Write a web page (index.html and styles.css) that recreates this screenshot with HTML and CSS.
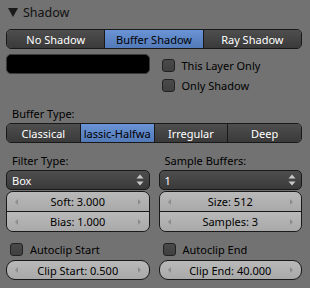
FILE: index.html
```html
<!DOCTYPE html>
<html>
<head>
<meta charset="utf-8">
<link rel="stylesheet" href="styles.css">
</head>
<body>
<div class="panel">
  <div class="header"><span class="tri"></span><span class="title">Shadow</span></div>
  <div class="radio row1">
    <div class="seg">No Shadow</div>
    <div class="seg sel">Buffer Shadow</div>
    <div class="seg">Ray Shadow</div>
  </div>
  <div class="cols row2">
    <div class="colorfield"></div>
    <div class="checks">
      <div class="check"><span class="box"></span>This Layer Only</div>
      <div class="check"><span class="box"></span>Only Shadow</div>
    </div>
  </div>
  <div class="label lbl-buffer">Buffer Type:</div>
  <div class="radio row-buffer">
    <div class="seg">Classical</div>
    <div class="seg sel">lassic-Halfwa</div>
    <div class="seg">Irregular</div>
    <div class="seg">Deep</div>
  </div>
  <div class="cols row-filter">
    <div class="col">
      <div class="label">Filter Type:</div>
      <div class="menu">Box<span class="updown"><svg width="8" height="12" viewBox="0 0 8 12"><path d="M4 0.5 L7.5 4.5 L0.5 4.5 Z M4 11.5 L7.5 7.5 L0.5 7.5 Z" fill="#c8c8c8"/></svg></span></div>
      <div class="numstack">
        <div class="num"><span class="arr l"></span>Soft: 3.000<span class="arr r"></span></div>
        <div class="num"><span class="arr l"></span>Bias: 1.000<span class="arr r"></span></div>
      </div>
    </div>
    <div class="col">
      <div class="label">Sample Buffers:</div>
      <div class="menu">1<span class="updown"><svg width="8" height="12" viewBox="0 0 8 12"><path d="M4 0.5 L7.5 4.5 L0.5 4.5 Z M4 11.5 L7.5 7.5 L0.5 7.5 Z" fill="#c8c8c8"/></svg></span></div>
      <div class="numstack">
        <div class="num"><span class="arr l"></span>Size: 512<span class="arr r"></span></div>
        <div class="num"><span class="arr l"></span>Samples: 3<span class="arr r"></span></div>
      </div>
    </div>
  </div>
  <div class="cols row-clip">
    <div class="col">
      <div class="check"><span class="box"></span>Autoclip Start</div>
      <div class="num single"><span class="arr l"></span>Clip Start: 0.500<span class="arr r"></span></div>
    </div>
    <div class="col">
      <div class="check"><span class="box"></span>Autoclip End</div>
      <div class="num single"><span class="arr l"></span>Clip End: 40.000<span class="arr r"></span></div>
    </div>
  </div>
</div>
</body>
</html>
```
FILE: styles.css
```css
html, body {
  margin: 0;
  padding: 0;
  background: #727272;
}
.panel {
  width: 310px;
  height: 288px;
  box-sizing: border-box;
  padding: 0 8px 0 6px;
  font-family: "Noto Sans", "DejaVu Sans", sans-serif;
  font-size: 11px;
  color: #000;
  overflow: hidden;
}
.header {
  height: 25px;
  display: flex;
  align-items: center;
  padding-left: 2px;
}
.tri {
  width: 0;
  height: 0;
  border-left: 5px solid transparent;
  border-right: 5px solid transparent;
  border-top: 9px solid #1a1a1a;
  margin-right: 5px;
}
.title {
  font-size: 12.5px;
  color: #111;
}
.radio {
  display: flex;
  height: 20px;
  border: 1px solid #191919;
  border-radius: 5px;
  box-sizing: border-box;
  overflow: hidden;
  margin-top: 4px;
}
.seg {
  flex: 1;
  display: flex;
  align-items: center;
  justify-content: center;
  color: #fff;
  background: linear-gradient(#4e4e4e, #3a3a3a);
  border-left: 1px solid #191919;
  white-space: nowrap;
  overflow: hidden;
}
.seg:first-child {
  border-left: none;
}
.seg.sel {
  background: linear-gradient(#6a94d6, #5379b8);
  color: #000;
}
.cols {
  display: grid;
  grid-template-columns: 1fr 1fr;
  column-gap: 9px;
}
.row2 {
  margin-top: 5px;
}
.colorfield {
  height: 20px;
  background: #000;
  border: 1px solid #3a3a3a;
  border-radius: 5px;
  box-sizing: border-box;
}
.checks {
  display: flex;
  flex-direction: column;
  padding-top: 1px;
}
.check {
  height: 20px;
  display: flex;
  align-items: center;
  padding-left: 3px;
  color: #000;
}
.box {
  width: 13px;
  height: 13px;
  box-sizing: border-box;
  border: 1px solid #222;
  border-radius: 3px;
  background: linear-gradient(#4a4a4a, #404040);
  margin-right: 7px;
}
.label {
  height: 20px;
  display: flex;
  align-items: center;
  padding-left: 6px;
}
.lbl-buffer {
  margin-top: 9px;
  height: 19px;
}
.row-buffer {
  margin-top: 0;
}
.row-filter {
  margin-top: 7px;
}
.menu {
  height: 20px;
  box-sizing: border-box;
  border: 1px solid #191919;
  border-radius: 5px;
  background: linear-gradient(#4e4e4e, #3a3a3a);
  color: #fff;
  display: flex;
  align-items: center;
  padding-left: 5px;
  position: relative;
}
.updown {
  position: absolute;
  right: 5px;
  top: 3px;
  display: flex;
}
.numstack {
  margin-top: 1px;
  border: 1px solid #191919;
  border-radius: 7px;
  overflow: hidden;
}
.num {
  height: 19px;
  display: flex;
  align-items: center;
  justify-content: center;
  background: linear-gradient(#b9b9b9, #a9a9a9);
  color: #000;
  position: relative;
}
.numstack .num + .num {
  border-top: 1px solid #191919;
}
.num.single {
  height: 20px;
  box-sizing: border-box;
  border: 1px solid #191919;
  border-radius: 9px;
}
.arr {
  position: absolute;
  top: 50%;
  margin-top: -3px;
  width: 0;
  height: 0;
  border-top: 3px solid transparent;
  border-bottom: 3px solid transparent;
}
.arr.l {
  left: 8px;
  border-right: 3px solid #8c8c8c;
}
.arr.r {
  right: 8px;
  border-left: 3px solid #8c8c8c;
}
.row-clip {
  margin-top: 7px;
}
.row-clip .check {
  padding-left: 4px;
  height: 20px;
  margin-bottom: 1px;
}
```
